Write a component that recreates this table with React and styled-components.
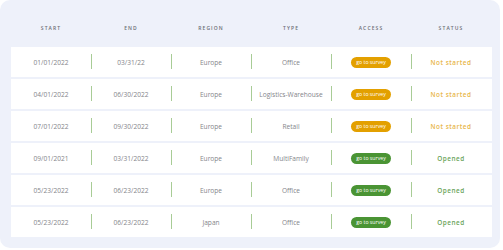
import styled, { createGlobalStyle } from "styled-components";

const GlobalStyle = createGlobalStyle`
  body {
    margin: 0;
    background: #ffffff;
    font-family: "Open Sans", "Liberation Sans", sans-serif;
  }
`;

const surveys = [
  { start: "01/01/2022", end: "03/31/22", region: "Europe", type: "Office", opened: false },
  { start: "04/01/2022", end: "06/30/2022", region: "Europe", type: "Logistics-Warehouse", opened: false },
  { start: "07/01/2022", end: "09/30/2022", region: "Europe", type: "Retail", opened: false },
  { start: "09/01/2021", end: "03/31/2022", region: "Europe", type: "MultiFamily", opened: true },
  { start: "05/23/2022", end: "06/23/2022", region: "Europe", type: "Office", opened: true },
  { start: "05/23/2022", end: "06/23/2022", region: "Japan", type: "Office", opened: true },
];

const columns = ["Start", "End", "Region", "Type", "Access", "Status"];

const App = () => {
  return (
    <>
      <GlobalStyle />
      <Card>
        <HeaderRow>
          {columns.map((col) => (
            <HeaderCell key={col}>{col}</HeaderCell>
          ))}
        </HeaderRow>
        <Body>
          {surveys.map((s, index) => (
            <Row key={index}>
              <Cell>{s.start}</Cell>
              <Cell divided>{s.end}</Cell>
              <Cell divided>{s.region}</Cell>
              <Cell divided>{s.type}</Cell>
              <Cell divided>
                <SurveyButton opened={s.opened}>go to survey</SurveyButton>
              </Cell>
              <Cell divided>
                <Status opened={s.opened}>{s.opened ? "Opened" : "Not started"}</Status>
              </Cell>
            </Row>
          ))}
        </Body>
      </Card>
    </>
  );
};

const Card = styled.div`
  width: 500px;
  height: 248px;
  box-sizing: border-box;
  background: #eef1fa;
  border-radius: 10px;
  padding: 0 8px 9px 11px;
  display: flex;
  flex-direction: column;
`;

const grid = `
  display: grid;
  grid-template-columns: repeat(6, 80px);
`;

const HeaderRow = styled.div`
  ${grid}
  height: 47px;
  align-items: center;
  padding-top: 8px;
  box-sizing: border-box;
`;

const HeaderCell = styled.div`
  text-align: center;
  font-size: 5px;
  font-weight: 600;
  letter-spacing: 1.1px;
  text-transform: uppercase;
  color: #6b6d75;
`;

const Body = styled.div`
  display: flex;
  flex-direction: column;
  gap: 2px;
`;

const Row = styled.div`
  ${grid}
  width: 481px;
  height: 30px;
  background: #ffffff;
  align-items: center;
`;

//cells after the first have a short green divider on their left.
const Cell = styled.div`
  position: relative;
  height: 100%;
  display: flex;
  align-items: center;
  justify-content: center;
  font-size: 6.6px;
  color: #84858a;

  &::before {
    content: "";
    display: ${(p) => (p.divided ? "block" : "none")};
    position: absolute;
    left: 0;
    top: 7px;
    width: 1px;
    height: 15px;
    background: #a8cc96;
  }
`;

const SurveyButton = styled.button`
  border: none;
  width: 40px;
  height: 11px;
  padding: 0;
  border-radius: 6px;
  background: ${(p) => (p.opened ? "#4a9434" : "#e3a000")};
  color: #ffffff;
  font-family: "Open Sans", "Liberation Sans", sans-serif;
  font-size: 5.2px;
  line-height: 11px;
`;

const Status = styled.span`
  font-size: 6.4px;
  font-weight: 600;
  letter-spacing: 0.5px;
  color: ${(p) => (p.opened ? "#6aa45a" : "#e8b64a")};
`;

export default App;
